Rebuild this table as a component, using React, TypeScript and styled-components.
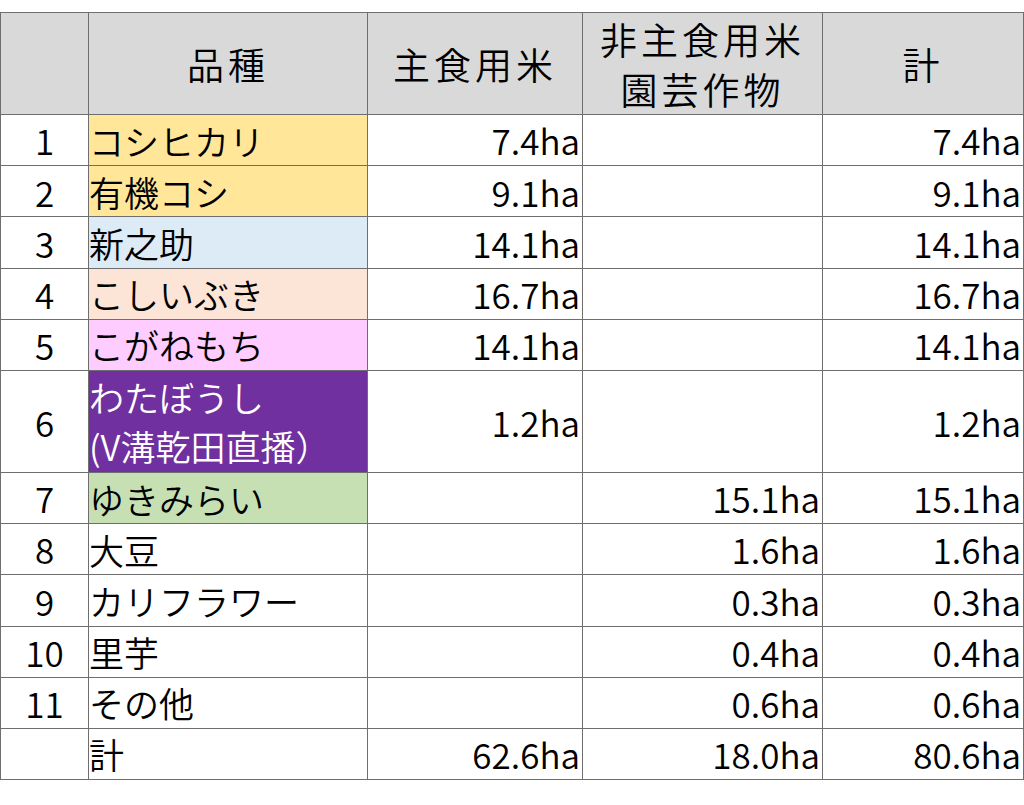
import React from 'react';
import styled, { createGlobalStyle } from 'styled-components';

const GlobalStyle = createGlobalStyle`
  html, body {
    margin: 0;
    padding: 0;
    background: #ffffff;
  }
  body {
    font-family: "Noto Sans CJK JP", "Noto Sans", sans-serif;
  }
`;

const Page = styled.div`
  padding-top: 12px;
  width: 1024px;
`;

const Table = styled.table`
  border-collapse: collapse;
  table-layout: fixed;
  width: 1023px;
  font-size: 35px;
  font-weight: 350;
  color: #000;
  td,
  th {
    border: 1px solid #6e6e6e;
    padding: 0;
    line-height: 1.3;
  }
`;

const HeadCell = styled.th`
  background: #d9d9d9;
  height: 101px;
  text-align: center;
  font-size: 37px;
  font-weight: 350;
  letter-spacing: 4px;
  line-height: 50px !important;
`;

const Row = styled.tr<{ $tall?: boolean }>`
  height: ${(p) => (p.$tall ? '102px' : '51.2px')};
`;

const NoCell = styled.td`
  text-align: center;
`;

const NameCell = styled.td<{ $bg?: string; $light?: boolean }>`
  background: ${(p) => p.$bg || 'transparent'};
  color: ${(p) => (p.$light ? '#ffffff' : '#000000')};
  text-align: left;
  white-space: nowrap;
  line-height: 49px !important;
`;

const NumCell = styled.td`
  text-align: right;
  padding-right: 2px !important;
`;

type Item = {
  no: string;
  name: React.ReactNode;
  bg?: string;
  light?: boolean;
  staple?: string;
  other?: string;
  total: string;
  tall?: boolean;
};

const items: Item[] = [
  { no: '1', name: 'コシヒカリ', bg: '#ffe699', staple: '7.4ha', total: '7.4ha' },
  { no: '2', name: '有機コシ', bg: '#ffe699', staple: '9.1ha', total: '9.1ha' },
  { no: '3', name: '新之助', bg: '#ddebf7', staple: '14.1ha', total: '14.1ha' },
  { no: '4', name: 'こしいぶき', bg: '#fce4d6', staple: '16.7ha', total: '16.7ha' },
  { no: '5', name: 'こがねもち', bg: '#ffccff', staple: '14.1ha', total: '14.1ha' },
  {
    no: '6',
    name: (
      <>
        わたぼうし
        <br />
        (V溝乾田直播）
      </>
    ),
    bg: '#7030a0',
    light: true,
    staple: '1.2ha',
    total: '1.2ha',
    tall: true,
  },
  { no: '7', name: 'ゆきみらい', bg: '#c6e0b4', other: '15.1ha', total: '15.1ha' },
  { no: '8', name: '大豆', other: '1.6ha', total: '1.6ha' },
  { no: '9', name: 'カリフラワー', other: '0.3ha', total: '0.3ha' },
  { no: '10', name: '里芋', other: '0.4ha', total: '0.4ha' },
  { no: '11', name: 'その他', other: '0.6ha', total: '0.6ha' },
  { no: '', name: '計', staple: '62.6ha', other: '18.0ha', total: '80.6ha' },
];

export default function App() {
  return (
    <Page>
      <GlobalStyle />
      <Table>
        <colgroup>
          <col style={{ width: 88 }} />
          <col style={{ width: 279 }} />
          <col style={{ width: 215 }} />
          <col style={{ width: 240 }} />
          <col style={{ width: 201 }} />
        </colgroup>
        <thead>
          <tr>
            <HeadCell />
            <HeadCell>品種</HeadCell>
            <HeadCell>主食用米</HeadCell>
            <HeadCell>
              非主食用米
              <br />
              園芸作物
            </HeadCell>
            <HeadCell>計</HeadCell>
          </tr>
        </thead>
        <tbody>
          {items.map((it, i) => (
            <Row key={i} $tall={it.tall}>
              <NoCell>{it.no}</NoCell>
              <NameCell $bg={it.bg} $light={it.light}>
                {it.name}
              </NameCell>
              <NumCell>{it.staple}</NumCell>
              <NumCell>{it.other}</NumCell>
              <NumCell>{it.total}</NumCell>
            </Row>
          ))}
        </tbody>
      </Table>
    </Page>
  );
}
